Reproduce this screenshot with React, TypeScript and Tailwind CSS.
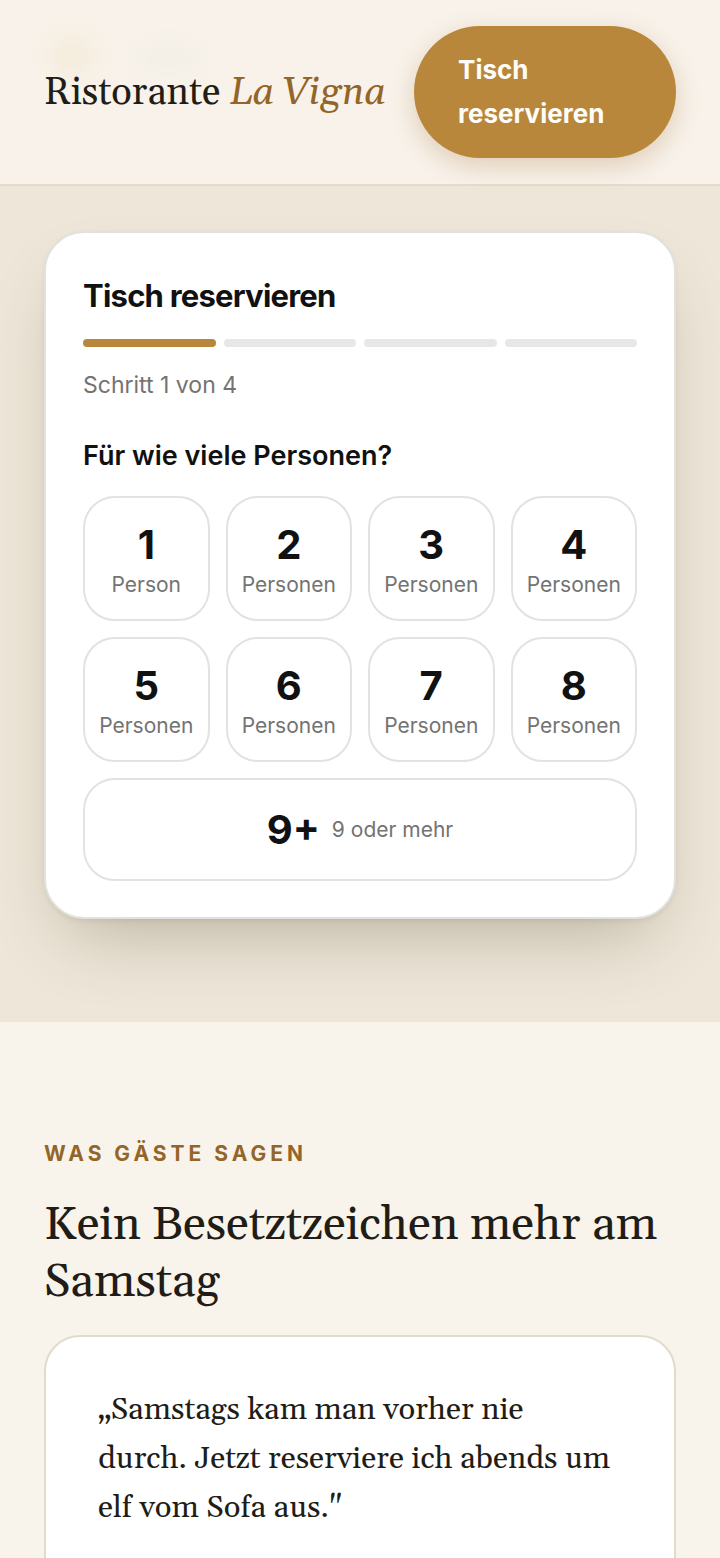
import React from 'react';

const guests = [1, 2, 3, 4, 5, 6, 7, 8];
const steps = [1, 2, 3, 4];

const Header: React.FC = () => (
  <header className="sticky top-0 z-10 flex items-center justify-between gap-7 border-b-2 border-[#e4dccb] bg-[#f8f2ea] px-11 py-[26px]">
    {/* Soft glow behind the name */}
    <div aria-hidden="true" className="absolute top-9 left-12 h-10 w-12 rounded-full bg-[#ecdcb8] opacity-30 blur-md" />
    <div aria-hidden="true" className="absolute top-12 left-34 h-5 w-16 rounded-full bg-[#dfe0da] opacity-30 blur-md" />
    <a href="#" className="relative shrink-0 pt-0.5 whitespace-nowrap font-[Gelasio,Georgia,'Liberation_Serif',serif] text-[38px] leading-[58px] text-[#211d16]">
      Ristorante <em className="text-[#946528]">La Vigna</em>
    </a>
    <button type="button" className="w-[262px] rounded-full bg-[#b8873b] px-11 py-[22px] text-left text-[26px] leading-11 font-bold text-[#fffdf8] shadow-[0_8px_24px_rgba(150,100,30,0.25)]">
      Tisch reservieren
    </button>
  </header>
);

const BookingCard: React.FC = () => (
  <section className="bg-[#eee7d9] px-11 pt-[45px] pb-[103px]">
    <div className="rounded-[40px] border-2 border-[#e2e2dd] bg-white px-[37px] pt-[43px] pb-9 shadow-[0_2px_4px_rgba(60,50,30,0.08),0_36px_72px_-24px_rgba(60,45,20,0.3)]">
      <h2 className="text-[31px] leading-10 font-bold tracking-tight">Tisch reservieren</h2>
      <div className="mt-[23px] flex gap-2">
        {steps.map((step) => (
          <div key={step} className={`h-2 flex-1 rounded-full ${step === 1 ? 'bg-[#b8873b]' : 'bg-[#e7e7e7]'}`} />
        ))}
      </div>
      <p className="mt-5 text-[23px] leading-9 text-[#737373]">Schritt 1 von 4</p>

      <h3 className="mt-[33px] text-[27px] leading-10 font-semibold">Für wie viele Personen?</h3>
      <div className="mt-5 grid grid-cols-4 gap-4">
        {guests.map((n) => (
          <button key={n} type="button" className="flex h-[125px] flex-col items-center justify-center rounded-[32px] border-2 border-[#e2e2e2] pt-2">
            <span className="text-[40px] leading-11 font-bold">{n}</span>
            <span className="text-[21px] leading-9 text-[#737373]">{n === 1 ? 'Person' : 'Personen'}</span>
          </button>
        ))}
        <button type="button" className="col-span-4 flex h-[103px] items-center justify-center gap-3 rounded-[32px] border-2 border-[#e2e2e2]">
          <span className="text-[40px] leading-11 font-bold">9+</span>
          <span className="text-[21px] text-[#737373]">9 oder mehr</span>
        </button>
      </div>
    </div>
  </section>
);

const Reviews: React.FC = () => (
  <section className="px-11 pt-28 pb-28">
    <p className="text-[21px] leading-10 font-bold tracking-[4px] text-[#946528]">WAS GÄSTE SAGEN</p>
    <h2 className="mt-[23px] font-[Gelasio,Georgia,'Liberation_Serif',serif] text-[47px] leading-[57px] text-[#211d16]">
      Kein Besetztzeichen mehr am Samstag
    </h2>
    <blockquote className="mt-6 rounded-[36px] border-2 border-[#e0dbca] bg-white pt-[49px] pr-14 pb-24 pl-[52px] font-[Gelasio,Georgia,'Liberation_Serif',serif] text-[31px] leading-[49px] text-[#211d16]">
      „Samstags kam man vorher nie durch. Jetzt reserviere ich abends um elf vom Sofa aus."
    </blockquote>
  </section>
);

const App: React.FC = () => (
  <div className="h-screen overflow-y-auto bg-[#f8f4eb] font-[Inter,sans-serif] text-[#111] [scrollbar-width:none]">
    <Header />
    <main>
      <BookingCard />
      <Reviews />
    </main>
  </div>
);

export default App;
